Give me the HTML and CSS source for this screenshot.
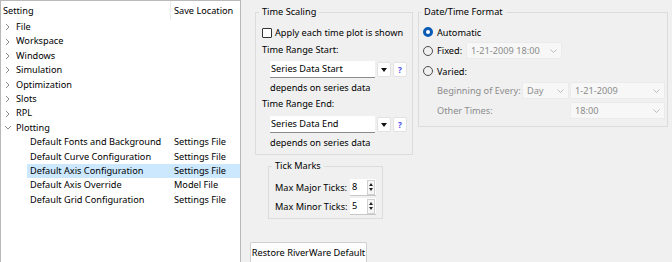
FILE: index.html
```html
<!DOCTYPE html>
<html lang="en">
  <head>
    <meta charset="UTF-8" />
    <title>Plot Settings</title>
    <link rel="stylesheet" href="styles.css">
  </head>
  <body>
    <div class="tree">
      <div class="tree-head">
        <span class="head-name">Setting</span>
        <span class="head-loc">Save Location</span>
      </div>
      <div class="row"><span class="name"><svg class="arrow" width="5" height="8"><path d="M1 1 L4 4 L1 7" /></svg>File</span></div>
      <div class="row"><span class="name"><svg class="arrow" width="5" height="8"><path d="M1 1 L4 4 L1 7" /></svg>Workspace</span></div>
      <div class="row"><span class="name"><svg class="arrow" width="5" height="8"><path d="M1 1 L4 4 L1 7" /></svg>Windows</span></div>
      <div class="row"><span class="name"><svg class="arrow" width="5" height="8"><path d="M1 1 L4 4 L1 7" /></svg>Simulation</span></div>
      <div class="row"><span class="name"><svg class="arrow" width="5" height="8"><path d="M1 1 L4 4 L1 7" /></svg>Optimization</span></div>
      <div class="row"><span class="name"><svg class="arrow" width="5" height="8"><path d="M1 1 L4 4 L1 7" /></svg>Slots</span></div>
      <div class="row"><span class="name"><svg class="arrow" width="5" height="8"><path d="M1 1 L4 4 L1 7" /></svg>RPL</span></div>
      <div class="row"><span class="name"><svg class="arrow open" width="8" height="5"><path d="M1 1 L4 4 L7 1" /></svg>Plotting</span></div>
      <div class="row child"><span class="name">Default Fonts and Background</span><span class="loc">Settings File</span></div>
      <div class="row child"><span class="name">Default Curve Configuration</span><span class="loc">Settings File</span></div>
      <div class="row child selected"><span class="name">Default Axis Configuration</span><span class="loc">Settings File</span></div>
      <div class="row child"><span class="name">Default Axis Override</span><span class="loc">Model File</span></div>
      <div class="row child"><span class="name">Default Grid Configuration</span><span class="loc">Settings File</span></div>
    </div>

    <div class="main">
      <div class="col-left">
        <fieldset class="group time-group">
          <legend>Time Scaling</legend>
          <label class="check-row"><span class="checkbox"></span>Apply each time plot is shown</label>
          <div class="label-row">Time Range Start:</div>
          <div class="combo-row">
            <div class="combo">Series Data Start</div>
            <span class="mini-btn"><svg width="6" height="4"><path d="M0 0 H6 L3 4 Z" /></svg></span>
            <span class="mini-btn help">?</span>
          </div>
          <div class="note">depends on series data</div>
          <div class="label-row end">Time Range End:</div>
          <div class="combo-row second">
            <div class="combo">Series Data End</div>
            <span class="mini-btn"><svg width="6" height="4"><path d="M0 0 H6 L3 4 Z" /></svg></span>
            <span class="mini-btn help">?</span>
          </div>
          <div class="note">depends on series data</div>
        </fieldset>

        <fieldset class="group tick-group">
          <legend>Tick Marks</legend>
          <div class="spin-row">
            <span class="spin-label">Max Major Ticks:</span>
            <span class="spin"><span class="spin-value">8</span><span class="spin-btns"><i class="up"></i><i class="down"></i></span></span>
          </div>
          <div class="spin-row">
            <span class="spin-label">Max Minor Ticks:</span>
            <span class="spin"><span class="spin-value">5</span><span class="spin-btns"><i class="up"></i><i class="down"></i></span></span>
          </div>
        </fieldset>

        <button class="restore">Restore RiverWare Default</button>
      </div>

      <div class="col-right">
        <fieldset class="group date-group">
          <legend>Date/Time Format</legend>
          <div class="radio-row first"><span class="radio checked"></span>Automatic</div>
          <div class="radio-row fixed">
            <span class="radio"></span>Fixed:
            <div class="dcombo fixed-combo">1-21-2009 18:00<svg width="7" height="4"><path d="M0.5 0.5 L3.5 3.5 L6.5 0.5" /></svg></div>
          </div>
          <div class="radio-row varied"><span class="radio"></span>Varied:</div>
          <div class="sub-row">
            <span class="sub-label begin">Beginning of Every:</span>
            <div class="dcombo day-combo">Day<svg width="7" height="4"><path d="M0.5 0.5 L3.5 3.5 L6.5 0.5" /></svg></div>
            <div class="dcombo wide-combo">1-21-2009<svg width="7" height="4"><path d="M0.5 0.5 L3.5 3.5 L6.5 0.5" /></svg></div>
          </div>
          <div class="sub-row other">
            <span class="sub-label">Other Times:</span>
            <div class="dcombo wide-combo">18:00<svg width="7" height="4"><path d="M0.5 0.5 L3.5 3.5 L6.5 0.5" /></svg></div>
          </div>
        </fieldset>
      </div>
    </div>
  </body>
</html>
```

FILE: styles.css
```css
body {
  margin: 0;
  display: flex;
  height: 262px;
  overflow: hidden;
  background: #f0f0f0;
  font-family: "Noto Sans", sans-serif;
  font-size: 9.2px;
  color: #000;
  white-space: nowrap;
}

/* settings tree */
.tree {
  width: 239px;
  height: 262px;
  background: #fff;
  border: 1px solid #b9b9b9;
  border-bottom: none;
  flex-shrink: 0;
}
.tree-head {
  display: flex;
  height: 19px;
  line-height: 19px;
}
.head-name {
  width: 167px;
  padding-left: 2px;
  border-right: 1px solid #ececec;
}
.head-loc {
  padding-left: 3px;
}
.row {
  display: flex;
  height: 14.4px;
  line-height: 14.4px;
}
.row .name {
  display: flex;
  align-items: center;
  width: 173px;
}
.arrow {
  flex-shrink: 0;
  margin: 0 6px 0 4px;
}
.arrow.open {
  margin: 0 4px 0 3px;
}
.arrow path {
  stroke: #8a8a8a;
  fill: none;
}
.row.child {
  margin-left: 26px;
}
.row.child .name {
  width: 144px;
  padding-left: 3px;
}
.row.selected {
  background: #cce8ff;
}

/* right side */
.main {
  display: flex;
  padding-left: 9px;
}
.col-left {
  width: 163px;
  display: flex;
  flex-direction: column;
}
.col-right {
  margin-left: 5px;
}
.group {
  margin: 0;
  padding: 0;
  border: 1px solid #dcdcdc;
  min-width: 0;
}
.group legend {
  margin-left: 3px;
  padding: 0 3px;
  line-height: 14px;
}

.time-group {
  margin: 5px 0 0 5px;
  width: 156px;
  padding-bottom: 4px;
}
.check-row {
  display: flex;
  align-items: center;
  margin: 7px 0 0 6px;
  height: 14px;
  line-height: 14px;
}
.checkbox {
  flex-shrink: 0;
  width: 8px;
  height: 8px;
  border: 1px solid #333;
  border-radius: 1px;
  background: #fff;
  margin-right: 3px;
}
.label-row {
  margin: 3px 0 0 6px;
  height: 14px;
  line-height: 14px;
}
.label-row.end {
  margin-top: 2px;
}
.combo-row {
  display: flex;
  align-items: center;
  margin: 4px 0 0 14px;
  height: 17px;
}
.combo-row.second {
  margin-top: 5px;
}
.combo {
  width: 104px;
  height: 16px;
  line-height: 16px;
  padding-left: 1px;
  background: #fff;
  border-bottom: 1px solid #8b8b8b;
  box-sizing: content-box;
}
.mini-btn {
  display: flex;
  align-items: center;
  justify-content: center;
  width: 12px;
  height: 13px;
  margin-left: 2px;
  background: #fff;
  border: 1px solid #e2e2e2;
  border-radius: 2px;
}
.mini-btn svg path {
  fill: #111;
}
.help {
  color: #4a4af0;
  font-size: 8px;
  font-weight: bold;
}
.note {
  margin: 3px 0 0 14px;
  height: 14px;
  line-height: 14px;
}

.tick-group {
  margin: 4px 0 0 18px;
  width: 113px;
  padding-bottom: 4px;
}
.spin-row {
  display: flex;
  align-items: center;
  margin: 6px 0 0 6px;
  height: 16px;
}
.spin-row + .spin-row {
  margin-top: 3px;
}
.spin-label {
  width: 75px;
}
.spin {
  display: flex;
  width: 26px;
  height: 16px;
  background: #fff;
  border-bottom: 1px solid #c8c8c8;
}
.spin-value {
  flex: 1;
  line-height: 16px;
  padding-left: 2px;
}
.spin-btns {
  display: flex;
  flex-direction: column;
  justify-content: space-evenly;
  align-items: center;
  width: 8px;
  border: 1px solid #d0d0d0;
  background: #f6f6f6;
  margin: 1px 1px 0 0;
  box-sizing: border-box;
  height: 15px;
}
.spin-btns i {
  width: 0;
  height: 0;
  border-left: 2px solid transparent;
  border-right: 2px solid transparent;
}
.spin-btns .up {
  border-bottom: 3px solid #222;
}
.spin-btns .down {
  border-top: 3px solid #222;
}

.restore {
  margin-top: auto;
  width: 117px;
  height: 20px;
  padding: 0;
  font: inherit;
  color: #000;
  background: #fdfdfd;
  border: 1px solid #d0d0d0;
  border-radius: 2px 2px 0 0;
  border-bottom: none;
  text-align: center;
  white-space: nowrap;
}

/* date / time format */
.date-group {
  margin-top: 5px;
  width: 248px;
  padding-bottom: 7px;
}
.date-group legend {
  margin-left: 2px;
}
.radio-row {
  display: flex;
  align-items: center;
  margin: 3px 0 0 4px;
  height: 17px;
}
.radio-row.first {
  margin-top: 6px;
  height: 14px;
}
.radio-row.varied {
  margin-top: 5px;
  height: 14px;
}
.radio {
  flex-shrink: 0;
  width: 8px;
  height: 8px;
  border: 1px solid #4d4d4d;
  border-radius: 50%;
  margin-right: 4px;
}
.radio.checked {
  width: 4px;
  height: 4px;
  border: 3px solid #0a5bb5;
  background: #fff;
}
.dcombo {
  display: flex;
  justify-content: space-between;
  align-items: center;
  height: 17px;
  padding: 0 4px 0 4px;
  box-sizing: border-box;
  background: #f7f7f7;
  color: #8c8c8c;
  border: 1px solid #ebebeb;
}
.dcombo svg path {
  stroke: #bdbdbd;
  fill: none;
}
.fixed-combo {
  width: 96px;
  margin-left: 4px;
}
.sub-row {
  display: flex;
  align-items: center;
  margin: 4px 0 0 18px;
  height: 17px;
  color: #8c8c8c;
}
.sub-row.other {
  margin-top: 3px;
}
.sub-label {
  width: 133px;
}
.sub-label.begin {
  width: 85px;
}
.day-combo {
  width: 47px;
  margin-right: 1px;
}
.wide-combo {
  width: 95px;
}
```
